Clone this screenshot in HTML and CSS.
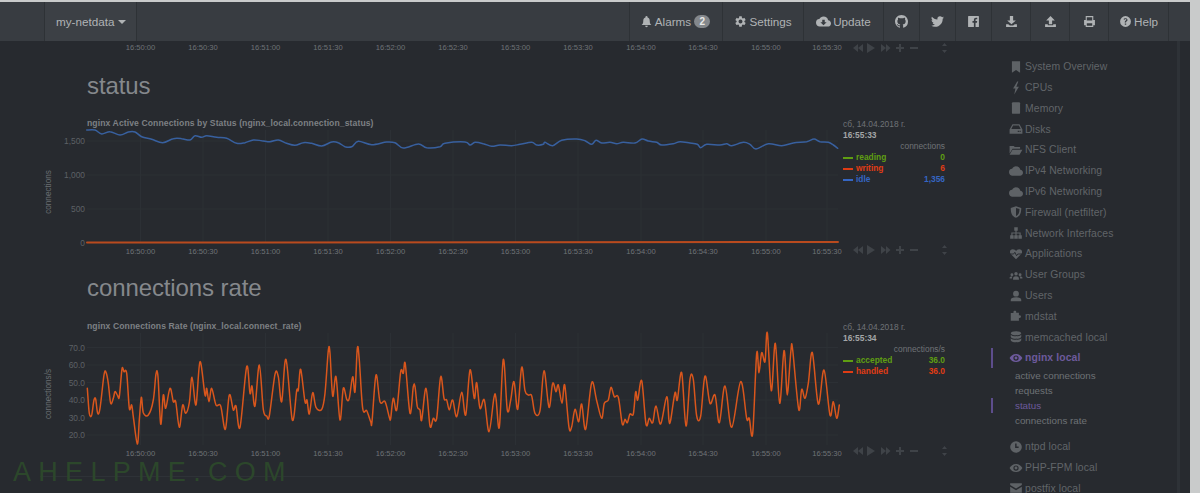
FILE: index.html
```html
<!DOCTYPE html>
<html lang="en">
<head>
<meta charset="utf-8">
<title>my-netdata</title>
<link rel="stylesheet" href="styles.css">
</head>
<body>
<svg class="defs" aria-hidden="true">
  <symbol id="i-bell" viewBox="0 0 24 24"><path d="M12 2a2 2 0 0 0-2 2v.6C7 5.5 6 8 6 11c0 4-1 5.500-3 7.500h18c-2-2-3-3.500-3-7.500 0-3-1-5.500-4-6.400V4a2 2 0 0 0-2-2zM9.500 20a2.500 2.500 0 0 0 5 0z"/></symbol>
  <symbol id="i-cog" viewBox="0 0 24 24"><path d="M19.14 12.94c.04-.3.06-.61.06-.94 0-.32-.02-.64-.07-.94l2.03-1.58a.49.49 0 0 0 .12-.61l-1.92-3.32a.488.488 0 0 0-.59-.22l-2.39.96c-.5-.38-1.03-.7-1.62-.94l-.36-2.54a.484.484 0 0 0-.48-.41h-3.84c-.24 0-.43.17-.47.41l-.36 2.54c-.59.24-1.13.57-1.62.94l-2.39-.96c-.22-.08-.47 0-.59.22L2.74 8.87c-.12.21-.08.47.12.61l2.03 1.58c-.05.3-.09.63-.09.94s.02.64.07.94l-2.03 1.58a.49.49 0 0 0-.12.61l1.92 3.32c.12.22.37.29.59.22l2.39-.96c.5.38 1.03.7 1.62.94l.36 2.54c.05.24.24.41.48.41h3.84c.24 0 .44-.17.47-.41l.36-2.54c.59-.24 1.13-.56 1.62-.94l2.39.96c.22.08.47 0 .59-.22l1.92-3.32c.12-.22.07-.47-.12-.61l-2.01-1.58zM12 15.600c-1.980 0-3.600-1.620-3.600-3.600s1.620-3.600 3.600-3.600 3.600 1.620 3.600 3.600-1.620 3.600-3.600 3.600z"/></symbol>
  <symbol id="i-cloud-down" viewBox="0 0 24 24"><path d="M19.35 10.04A7.490 7.490 0 0 0 12 4C9.110 4 6.600 5.640 5.350 8.040A5.994 5.994 0 0 0 0 14c0 3.310 2.690 6 6 6h13c2.760 0 5-2.240 5-5 0-2.640-2.050-4.780-4.650-4.960zM17 13l-5 5-5-5h3V9h4v4h3z"/></symbol>
  <symbol id="i-cloud" viewBox="0 0 24 24"><path d="M19.35 10.04A7.490 7.490 0 0 0 12 4C9.110 4 6.600 5.640 5.350 8.040A5.994 5.994 0 0 0 0 14c0 3.310 2.690 6 6 6h13c2.760 0 5-2.240 5-5 0-2.640-2.050-4.780-4.650-4.960z"/></symbol>
  <symbol id="i-github" viewBox="0 0 16 16"><path d="M8 0C3.58 0 0 3.58 0 8c0 3.54 2.290 6.530 5.470 7.590.4.07.55-.17.55-.38 0-.19-.01-.82-.01-1.490-2.010.37-2.530-.49-2.690-.94-.09-.23-.48-.94-.82-1.130-.28-.15-.68-.52-.01-.53.63-.01 1.080.58 1.230.82.72 1.210 1.870.87 2.330.66.07-.52.28-.87.51-1.070-1.780-.2-3.640-.89-3.640-3.950 0-.87.31-1.590.82-2.150-.08-.2-.36-1.020.08-2.120 0 0 .67-.21 2.200.82.64-.18 1.320-.27 2-.27s1.360.09 2 .27c1.530-1.040 2.200-.82 2.200-.82.44 1.100.16 1.920.08 2.120.51.56.82 1.270.82 2.150 0 3.070-1.870 3.750-3.650 3.950.29.25.54.73.54 1.480 0 1.070-.01 1.930-.01 2.200 0 .21.15.46.55.38A8.013 8.013 0 0 0 16 8c0-4.420-3.580-8-8-8z"/></symbol>
  <symbol id="i-twitter" viewBox="0 0 24 24"><path d="M23.950 4.570a10 10 0 0 1-2.820.77 4.960 4.960 0 0 0 2.160-2.720c-.95.55-2 .95-3.130 1.180a4.920 4.920 0 0 0-8.380 4.480C7.690 8.090 4.060 6.130 1.640 3.160a4.820 4.820 0 0 0-.67 2.480c0 1.710.87 3.210 2.190 4.100a4.900 4.900 0 0 1-2.230-.62v.06a4.920 4.920 0 0 0 3.950 4.830 4.900 4.900 0 0 1-2.210.08 4.940 4.940 0 0 0 4.600 3.420A9.870 9.870 0 0 1 0 19.540a14 14 0 0 0 7.560 2.210c9.050 0 14-7.500 14-14 0-.21 0-.42-.02-.63a9.940 9.940 0 0 0 2.460-2.550z"/></symbol>
  <symbol id="i-facebook" viewBox="0 0 24 24"><path d="M21 2H3a1 1 0 0 0-1 1v18a1 1 0 0 0 1 1h9.700v-7.700h-2.600v-3h2.600V9.100c0-2.600 1.600-4 3.900-4 1.100 0 2.100.1 2.300.1v2.700h-1.600c-1.300 0-1.500.6-1.500 1.500v1.900h3l-.4 3h-2.600V22H21a1 1 0 0 0 1-1V3a1 1 0 0 0-1-1z"/></symbol>
  <symbol id="i-download" viewBox="0 0 24 24"><path d="M9 2h6v8h5l-8 7-8-7h5zM2 17h4l3 2.500h6l3-2.500h4v5H2z"/></symbol>
  <symbol id="i-upload" viewBox="0 0 24 24"><path d="M12 2l8 8h-5v7H9v-7H4zM2 17h5v2h10v-2h5v5H2z"/></symbol>
  <symbol id="i-print" viewBox="0 0 24 24"><path fill-rule="evenodd" d="M5 2h14v7h3v10h-3v3H5v-3H2V9h3zm2 2v6h10V4zm0 11v5h10v-5z"/></symbol>
  <symbol id="i-help" viewBox="0 0 24 24"><path fill-rule="evenodd" d="M12 2a10 10 0 1 0 0 20 10 10 0 0 0 0-20zm1.300 16h-2.600v-2.500h2.600zm2-7.500c-.7.800-1.300 1.200-1.700 1.700-.4.400-.6.900-.6 1.800h-2.500c0-1.300.3-2.200.9-2.900.6-.6 1.400-1.100 1.900-1.700.3-.4.4-.7.300-1.100-.1-.7-.7-1.100-1.400-1.100-.8 0-1.400.5-1.600 1.400l-2.300-.9C8.900 6.900 10.300 6 12 6c2 0 3.500 1.200 3.700 2.900.1.600-.1 1.100-.4 1.600z"/></symbol>
  <symbol id="i-bookmark" viewBox="0 0 24 24"><path d="M5 2h14v20l-7-5-7 5z"/></symbol>
  <symbol id="i-bolt" viewBox="0 0 24 24"><path d="M14 1L7 13h4l-2 10 8-13h-4.500L16 1z"/></symbol>
  <symbol id="i-memory" viewBox="0 0 24 24"><path d="M7 2h10a2 2 0 0 1 2 2v16a2 2 0 0 1-2 2H7a2 2 0 0 1-2-2V4a2 2 0 0 1 2-2z"/></symbol>
  <symbol id="i-hdd" viewBox="0 0 24 24"><path fill-rule="evenodd" d="M6 4h12l5 9v7H1v-7zM7 6l-3 6h16l-3-6zM15 15v2h2v-2zm3 0v2h2v-2z"/></symbol>
  <symbol id="i-folder" viewBox="0 0 24 24"><path d="M1 5h7l2 2h9v3H6l-5 8zM6 11.500h17L18 20H1z"/></symbol>
  <symbol id="i-shield" viewBox="0 0 24 24"><path fill-rule="evenodd" d="M12 2l9 3c0 9-2 14-9 17-7-3-9-8-9-17zm0 3v14c4.500-2 6-5.500 6-12z"/></symbol>
  <symbol id="i-sitemap" viewBox="0 0 24 24"><path d="M9 2h6v6h-2v3h7v5h2v6h-6v-6h2v-3h-5v3h2v6H9v-6h2v-3H6v3h2v6H2v-6h2v-5h7V8H9z"/></symbol>
  <symbol id="i-heart" viewBox="0 0 24 24"><path d="M12 21L3 12C0 8.500 2 4 6.500 4 9 4 11 5.500 12 7c1-1.500 3-3 5.500-3C22 4 24 8.500 21 12z"/><path class="pulse" d="M2 12h6l2-3 3 6 2-3h7"/></symbol>
  <symbol id="i-users" viewBox="0 0 24 24"><path d="M12 7a3 3 0 1 1 0 6 3 3 0 0 1 0-6zM5 9a2.500 2.500 0 1 1 0 5 2.500 2.500 0 0 1 0-5zm14 0a2.500 2.500 0 1 1 0 5 2.500 2.500 0 0 1 0-5zM7 20v-2c0-2.500 2-4 5-4s5 1.500 5 4v2zM1 18v-1.500C1 15 3 14.500 6 14.500c-.8.800-1 2-1 3.500zm22 0h-4c0-1.500-.2-2.700-1-3.500 3 0 5 .5 5 2z"/></symbol>
  <symbol id="i-user" viewBox="0 0 24 24"><path d="M12 3a5 5 0 1 1 0 10 5 5 0 0 1 0-10zM3 21v-2.500C3 15.500 6 14 12 14s9 1.500 9 4.500V21z"/></symbol>
  <symbol id="i-puzzle" viewBox="0 0 24 24"><path d="M10 3c1.500 0 2.500 1 2.500 2 0 .6-.3 1-.5 1.500h5V11c.5-.2 1-.5 1.500-.5 1 0 2 1 2 2.500s-1 2.500-2 2.500c-.5 0-1-.3-1.500-.5V20H3V7h5c-.2-.5-.5-.9-.5-1.500C7.500 4 8.500 3 10 3z"/></symbol>
  <symbol id="i-database" viewBox="0 0 24 24"><path d="M12 2c5 0 9 1.300 9 3.500S17 9 12 9 3 7.700 3 5.500 7 2 12 2zM3 8c1.500 1.800 5 2.700 9 2.700s7.500-.9 9-2.700v3.500c0 2.200-4 3.500-9 3.500s-9-1.300-9-3.500zm0 6c1.500 1.800 5 2.700 9 2.700s7.500-.9 9-2.700v3.500c0 2.200-4 3.500-9 3.500s-9-1.300-9-3.500z"/></symbol>
  <symbol id="i-eye" viewBox="0 0 24 24"><path fill-rule="evenodd" d="M12 5c5 0 9 3 11 7-2 4-6 7-11 7S3 16 1 12c2-4 6-7 11-7zm0 2.500a4.500 4.500 0 1 0 0 9 4.500 4.500 0 0 0 0-9zm0 2a2.500 2.500 0 1 1 0 5 2.500 2.500 0 0 1 0-5z"/></symbol>
  <symbol id="i-clock" viewBox="0 0 24 24"><path fill-rule="evenodd" d="M12 2a10 10 0 1 1 0 20 10 10 0 0 1 0-20zm-1.500 4v7.500h6V11H13V6z"/></symbol>
  <symbol id="i-envelope" viewBox="0 0 24 24"><path d="M2 4h20v3l-10 6L2 7zM2 10l10 6 10-6v10H2z"/></symbol>
</svg>

<div class="app">
  <nav class="nav">
    <a class="brand">my-netdata <span class="caret"></span></a>
    <div class="nav-right">
      <a class="nav-item alarms"><svg class="ico"><use href="#i-bell"/></svg>Alarms<span class="badge">2</span></a>
      <a class="nav-item settings"><svg class="ico"><use href="#i-cog"/></svg>Settings</a>
      <a class="nav-item update"><svg class="ico ico-wide"><use href="#i-cloud-down"/></svg>Update</a>
      <a class="nav-item icon-only"><svg class="ico"><use href="#i-github"/></svg></a>
      <a class="nav-item icon-only"><svg class="ico"><use href="#i-twitter"/></svg></a>
      <a class="nav-item icon-only"><svg class="ico"><use href="#i-facebook"/></svg></a>
      <a class="nav-item icon-only wide"><svg class="ico"><use href="#i-download"/></svg></a>
      <a class="nav-item icon-only wide"><svg class="ico"><use href="#i-upload"/></svg></a>
      <a class="nav-item icon-only wide"><svg class="ico"><use href="#i-print"/></svg></a>
      <a class="nav-item help"><svg class="ico"><use href="#i-help"/></svg>Help</a>
    </div>
  </nav>

  <div class="body">
    <main class="content">
      <svg class="strip" data-chart="strip" viewBox="40 41 920 19"></svg>

      <h2 class="section-title first">status</h2>
      <section class="chart">
        <div class="chart-title">nginx Active Connections by Status (nginx_local.connection_status)</div>
        <svg class="plot" data-chart="status" viewBox="40 128 920 134"></svg>
        <div class="legend">
          <div class="legend-date">сб, 14.04.2018 г.</div>
          <div class="legend-time">16:55:33</div>
          <div class="legend-unit">connections</div>
          <div class="legend-row green"><span class="dash"></span><span class="name">reading</span><span class="value">0</span></div>
          <div class="legend-row red"><span class="dash"></span><span class="name">writing</span><span class="value">6</span></div>
          <div class="legend-row blue"><span class="dash"></span><span class="name">idle</span><span class="value">1,356</span></div>
        </div>
      </section>

      <h2 class="section-title">connections rate</h2>
      <section class="chart">
        <div class="chart-title">nginx Connections Rate (nginx_local.connect_rate)</div>
        <svg class="plot" data-chart="rate" viewBox="40 331 920 134"></svg>
        <div class="legend">
          <div class="legend-date">сб, 14.04.2018 г.</div>
          <div class="legend-time">16:55:34</div>
          <div class="legend-unit">connections/s</div>
          <div class="legend-row green"><span class="dash"></span><span class="name">accepted</span><span class="value">36.0</span></div>
          <div class="legend-row red"><span class="dash"></span><span class="name">handled</span><span class="value">36.0</span></div>
        </div>
      </section>
      <div class="divider"></div>
    </main>

    <aside class="sidebar">
      <ul class="menu">
        <li><svg class="mico"><use href="#i-bookmark"/></svg>System Overview</li>
        <li><svg class="mico"><use href="#i-bolt"/></svg>CPUs</li>
        <li><svg class="mico"><use href="#i-memory"/></svg>Memory</li>
        <li><svg class="mico"><use href="#i-hdd"/></svg>Disks</li>
        <li><svg class="mico"><use href="#i-folder"/></svg>NFS Client</li>
        <li><svg class="mico"><use href="#i-cloud"/></svg>IPv4 Networking</li>
        <li><svg class="mico"><use href="#i-cloud"/></svg>IPv6 Networking</li>
        <li><svg class="mico"><use href="#i-shield"/></svg>Firewall (netfilter)</li>
        <li><svg class="mico"><use href="#i-sitemap"/></svg>Network Interfaces</li>
        <li><svg class="mico"><use href="#i-heart"/></svg>Applications</li>
        <li><svg class="mico"><use href="#i-users"/></svg>User Groups</li>
        <li><svg class="mico"><use href="#i-user"/></svg>Users</li>
        <li><svg class="mico"><use href="#i-puzzle"/></svg>mdstat</li>
        <li><svg class="mico"><use href="#i-database"/></svg>memcached local</li>
        <li class="active"><svg class="mico"><use href="#i-eye"/></svg>nginx local</li>
        <li class="sub">active connections</li>
        <li class="sub">requests</li>
        <li class="sub current">status</li>
        <li class="sub last">connections rate</li>
        <li><svg class="mico"><use href="#i-clock"/></svg>ntpd local</li>
        <li><svg class="mico"><use href="#i-eye"/></svg>PHP-FPM local</li>
        <li><svg class="mico"><use href="#i-envelope"/></svg>postfix local</li>
      </ul>
    </aside>
  </div>
  <div class="watermark">AHELPME.COM</div>
</div>
<script src="charts.js"></script>
</body>
</html>
```

FILE: styles.css
```css
* { box-sizing: border-box; }
html, body { margin: 0; height: 100%; }
body {
  background: #c9cbcb;
  font-family: "Liberation Sans", Arial, sans-serif;
  overflow: hidden;
  padding: 2px 10px 0 0;
}
.defs { display: none; }
.app {
  position: relative;
  height: 491px;
  background: #272a2f;
  overflow: hidden;
}

/* navbar */
.nav {
  display: flex;
  justify-content: space-between;
  height: 39px;
  padding-left: 44px;
  background: #383c41;
  color: #b0b3b5;
  font-size: 11.7px;
}
.brand {
  display: flex;
  align-items: center;
  gap: 4px;
  width: 93px;
  padding-left: 11px;
  background: #3c4045;
  border-left: 1px solid #2e3236;
  border-right: 1px solid #2e3236;
}
.caret {
  width: 0;
  height: 0;
  border: 4px solid transparent;
  border-top-color: #b0b3b5;
  border-bottom: 0;
}
.nav-right { display: flex; padding-right: 21px; }
.nav-item {
  display: flex;
  align-items: center;
  justify-content: center;
  gap: 2px;
  height: 100%;
  border-left: 1px solid #2e3236;
  white-space: pre;
}
.nav-item:last-child { border-right: 1px solid #2e3236; }
.alarms { width: 93px; padding-right: 2px; }
.settings { width: 81px; }
.update { width: 80px; }
.icon-only { width: 36px; }
.icon-only.wide { width: 39px; }
.help { width: 61px; }
.ico { width: 13px; height: 13px; fill: #b0b3b5; }
.ico-wide { width: 15px; height: 15px; }
.badge {
  display: inline-block;
  min-width: 16px;
  margin-left: 1px;
  padding: 1px 0;
  border-radius: 8px;
  background: #84888c;
  color: #e8e8e8;
  font-size: 10px;
  font-weight: bold;
  text-align: center;
}

/* main */
.body { display: flex; height: 452px; }
.content { width: 990px; padding-left: 40px; }
.strip { display: block; width: 920px; height: 19px; }
.section-title {
  margin: 12px 0 17px 47px;
  height: 28px;
  color: #85888c;
  font-size: 24px;
  font-weight: normal;
  line-height: 28px;
  letter-spacing: -.1px;
}
.section-title.first { margin-top: 12px; margin-bottom: 16px; }

.chart {
  display: grid;
  grid-template-columns: 803px 117px;
  grid-template-rows: 12px 134px;
  width: 920px;
}
.chart-title {
  grid-column: 1;
  grid-row: 1;
  padding-left: 47px;
  color: #7d8084;
  font-size: 8.6px;
  font-weight: bold;
  line-height: 14px;
  letter-spacing: .1px;
  white-space: nowrap;
}
.plot { grid-column: 1 / 3; grid-row: 2; width: 920px; height: 134px; }
.legend {
  grid-column: 2;
  grid-row: 1 / 3;
  z-index: 1;
  width: 102px;
  padding-top: 3px;
  font-size: 8.4px;
  line-height: 11px;
  color: #6f7377;
}
.legend-time { color: #a3a6a8; font-weight: bold; }
.legend-unit { text-align: right; }
.legend-row { display: flex; align-items: center; font-weight: bold; }
.dash { width: 10px; height: 2px; margin-right: 3px; background: currentColor; }
.value { margin-left: auto; }
.green { color: #5f9e12; }
.red { color: #e03c14; }
.blue { color: #3566c4; }
.divider { width: 800px; height: 1px; margin-top: 11px; background: #2e3237; }

svg text { font-family: "Liberation Sans", Arial, sans-serif; }
.tick-x { fill: #6f7377; font-size: 7.6px; text-anchor: middle; }
.tick-y { fill: #5d6165; font-size: 8.4px; text-anchor: end; }
.axis-name { fill: #6a6e72; font-size: 8.2px; text-anchor: middle; }
.grid { stroke: #2c3035; stroke-width: 1; }
.ctl { fill: #3f4348; }
.line { fill: none; stroke-linejoin: round; stroke-linecap: round; }
.line-blue { stroke: #38609f; stroke-width: 1.5; }
.line-orange { stroke: #d9561c; stroke-width: 1.5; }
.line-base { stroke: #b94a1e; stroke-width: 2; }

/* sidebar */
.sidebar {
  width: 200px;
  padding-top: 15.4px;
  background: linear-gradient(90deg, transparent 187px, #2e3237 187px, #2e3237 190px, transparent 190px);
}
.menu { margin: 0; padding: 0; list-style: none; color: #616569; font-size: 10.4px; letter-spacing: .1px; }
.menu li {
  position: relative;
  display: flex;
  align-items: center;
  height: 20.8px;
  padding-left: 19px;
  white-space: nowrap;
}
.mico { flex: none; width: 14px; height: 14px; margin-right: 2px; fill: #5e6266; }
.pulse { fill: none; stroke: #272a2f; stroke-width: 1.6; }
.menu .sub {
  height: 15px;
  padding-left: 25px;
  color: #6e7276;
  font-size: 9.8px;
  letter-spacing: 0;
}
.menu .sub.last { margin-bottom: 8px; }
.menu .active { color: #6d5a9c; font-weight: bold; }
.menu .active .mico { fill: #6d5a9c; }
.menu .current { color: #6d5a9c; }
.menu .active::before,
.menu .current::before {
  content: "";
  position: absolute;
  left: 1px;
  top: 0;
  bottom: 0;
  width: 1.5px;
  background: #5d4d8c;
}

.watermark {
  position: absolute;
  left: 13px;
  top: 455px;
  color: #2c472b;
  font-size: 27px;
  line-height: 30px;
  letter-spacing: 7.3px;
  white-space: nowrap;
}
```

FILE: charts.js
```js
(function () {
  var NS = 'http://www.w3.org/2000/svg';
  var TIMES = ['16:50:00', '16:50:30', '16:51:00', '16:51:30', '16:52:00', '16:52:30',
    '16:53:00', '16:53:30', '16:54:00', '16:54:30', '16:55:00', '16:55:30'];
  var X = [140.5, 203, 265.5, 328, 390.5, 453, 515.5, 578, 641, 703, 766, 827];

  function scale(raw, ox, oy) {
    var out = [];
    for (var i = 0; i < raw.length; i += 2) out.push([raw[i] / 3 + ox, raw[i + 1] / 3 + oy]);
    return out;
  }

  var rateA = [262,205,268,280,275,285,282,240,287,238,293,280,300,265,312,165,318,157,325,190,332,250,340,235,345,215,352,225,358,230,366,147,372,155,380,160,388,265,395,255,400,290,412,372,418,300,424,232,430,278,445,285,460,240,468,162,474,170,482,312,490,225,497,265,510,205,520,245,527,245,538,322,548,255,557,280,568,248,576,172,588,255,600,125,615,225,620,205,627,245,635,205,648,255,662,258,676,328,688,225,700,270,708,258,720,322,740,140,750,220,756,198,765,258,778,135,790,268,800,288,808,288,825,163,835,170,845,245,858,118,877,300,890,212,895,210,902,148,915,245,921,240,928,282,938,218,948,262,965,268,975,220,985,92,990,100,998,228,1008,170,1020,300,1030,205,1040,238,1048,235,1058,170,1065,215,1072,85,1078,120,1088,265,1100,272,1112,305,1116,305,1128,165,1140,245,1155,245,1168,292,1172,295,1180,235,1190,270,1202,155,1210,160,1216,132,1230,280,1240,200,1245,200,1252,260];
  var rateB = [0,270,5,300,18,205,30,318,40,295,50,295,62,170,72,235,80,240,88,270,98,240,110,290,125,217,137,285,150,150,163,235,170,188,180,265,193,240,207,335,222,232,228,235,238,322,250,118,262,270,272,240,282,185,293,268,305,142,315,212,325,225,335,228,345,280,360,272,372,152,387,262,398,190,408,215,415,195,426,250,434,195,447,322,455,320,465,268,476,305,485,252,497,328,515,188,530,242,545,295,553,250,565,240,573,202,583,230,595,232,607,312,615,298,622,308,630,282,640,282,647,215,653,240,665,182,678,312,688,295,698,308,708,258,722,312,740,230,747,302,752,300,765,218,772,240,785,158,798,318,810,178,820,178,830,288,842,288,855,168,870,250,885,225,898,308,915,198,935,322,962,185,980,295,988,295,998,340,1010,100,1017,158,1025,98,1035,125,1042,38,1054,212,1066,70,1079,250,1092,92,1100,210,1104,210,1113,90,1118,90,1136,268,1145,208,1155,235,1165,190,1177,98,1195,252,1212,150,1230,285,1240,245,1250,295,1258,255];
  var blueA = [50,30,75,30,95,42,120,35,150,45,175,36,195,36,215,50,245,58,278,68,310,56,335,56,360,60,375,47,395,52,410,47,440,52,470,55,500,70,525,68,550,60,575,62,600,65,625,60,650,70,675,76,700,68,725,70,755,78,785,66,805,68,825,80,845,80,865,64,905,74,950,66,975,68,1000,84,1045,72,1070,83,1110,80,1125,70,1185,66,1200,75];
  var blueB = [45,52,70,56,95,64,120,60,155,62,180,58,215,52,230,60,250,58,255,52,278,62,305,46,350,42,375,47,395,58,408,46,425,54,450,52,470,56,490,52,525,54,546,42,565,48,590,52,605,60,640,56,660,50,690,54,712,58,722,68,740,58,780,60,800,56,815,62,850,52,870,58,888,72,925,56,965,62,1000,54,1040,50,1062,42,1080,50,1105,52,1120,60,1133,70];

  function smooth(p) {
    var d = 'M' + p[0][0].toFixed(1) + ' ' + p[0][1].toFixed(1);
    for (var i = 0; i < p.length - 1; i++) {
      var a = p[Math.max(i - 1, 0)], b = p[i], c = p[i + 1], e = p[Math.min(i + 2, p.length - 1)];
      d += 'C' + (b[0] + (c[0] - a[0]) / 6).toFixed(1) + ' ' + (b[1] + (c[1] - a[1]) / 6).toFixed(1) +
        ' ' + (c[0] - (e[0] - b[0]) / 6).toFixed(1) + ' ' + (c[1] - (e[1] - b[1]) / 6).toFixed(1) +
        ' ' + c[0].toFixed(1) + ' ' + c[1].toFixed(1);
    }
    return d;
  }

  function el(svg, name, attrs, text) {
    var n = document.createElementNS(NS, name);
    for (var k in attrs) n.setAttribute(k, attrs[k]);
    if (text) n.textContent = text;
    svg.appendChild(n);
    return n;
  }

  function xLabels(svg, y) {
    X.forEach(function (x, i) {
      el(svg, 'text', { x: x, y: y, 'class': 'tick-x' }, TIMES[i]);
    });
  }

  function controls(svg, y) {
    var ps = [
      'M853 ' + y + 'l5-4v8zM858 ' + y + 'l5-4v8z',
      'M867 ' + (y - 5) + 'l8 5-8 5z',
      'M881 ' + (y - 4) + 'l5 4-5 4zM886 ' + (y - 4) + 'l4.500 4-4.500 4z',
      'M899 ' + (y - 4) + 'h2v3h3v2h-3v3h-2v-3h-3v-2h3z',
      'M910 ' + (y - 1) + 'h8v2h-8z',
      'M944.500 ' + (y - 5) + 'l2.500 3h-5zM944.500 ' + (y + 5) + 'l2.500-3h-5z'
    ];
    ps.forEach(function (d) { el(svg, 'path', { d: d, 'class': 'ctl' }); });
  }

  function frame(svg, top, bottom, ticks, name, nameY) {
    X.forEach(function (x) {
      el(svg, 'line', { x1: x, x2: x, y1: top, y2: bottom, 'class': 'grid' });
    });
    ticks.forEach(function (t) {
      el(svg, 'line', { x1: 87, x2: 838, y1: t[1], y2: t[1], 'class': 'grid' });
      el(svg, 'text', { x: 85, y: t[1] + 3, 'class': 'tick-y' }, t[0]);
    });
    el(svg, 'text', {
      x: 51, y: nameY, 'class': 'axis-name',
      transform: 'rotate(-90 51 ' + nameY + ')'
    }, name);
  }

  var strip = document.querySelector('[data-chart=strip]');
  xLabels(strip, 50);
  controls(strip, 48);

  var st = document.querySelector('[data-chart=status]');
  frame(st, 130, 243, [['1,500', 141], ['1,000', 175], ['500', 209], ['0', 243]], 'connections', 192);
  el(st, 'path', { d: smooth(scale(blueA, 70, 120).concat(scale(blueB, 460, 125))), 'class': 'line line-blue' });
  el(st, 'path', { d: 'M87 242.500C300 241.500 600 243 838 242', 'class': 'line line-base' });
  xLabels(st, 254);
  controls(st, 250);

  var rt = document.querySelector('[data-chart=rate]');
  frame(rt, 333, 445, [['70.0', 347.5], ['60.0', 365], ['50.0', 382.5], ['40.0', 400], ['30.0', 418], ['20.0', 435]], 'connections/s', 394);
  el(rt, 'path', { d: smooth(scale(rateA, 0, 320).concat(scale(rateB, 420, 320))), 'class': 'line line-orange' });
  xLabels(rt, 456);
  controls(rt, 451);
})();
```
